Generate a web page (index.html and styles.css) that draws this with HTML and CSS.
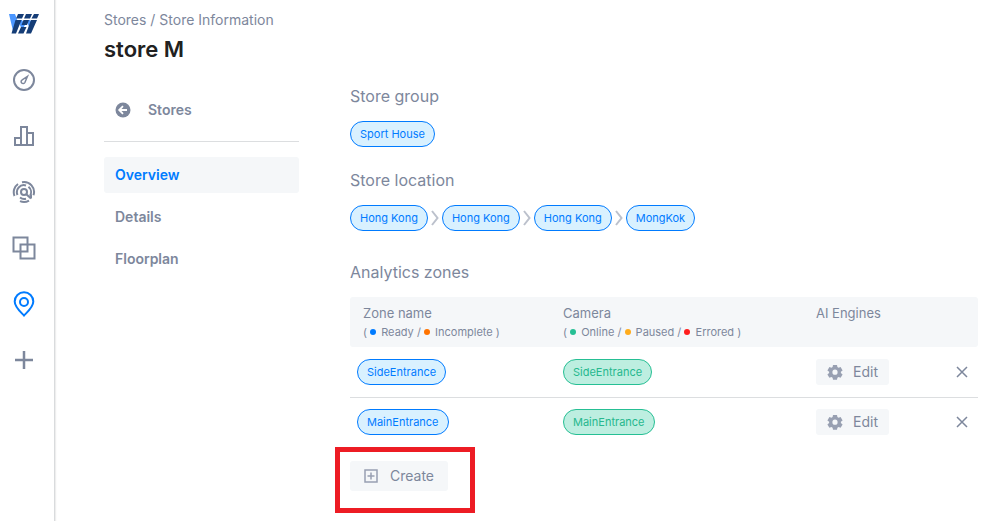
FILE: index.html
```html
<!DOCTYPE html>
<html lang="en">
<head>
    <meta charset="UTF-8">
    <meta name="viewport" content="width=device-width, initial-scale=1.0">
    <title>Store Information</title>
    <link rel="stylesheet" href="styles.css">
</head>
<body>
    <nav class="sidebar" aria-label="Main">
        <a class="logo" href="#" aria-label="Home">
            <svg width="30" height="20" viewBox="0 0 30 20">
                <path fill="#4a96ff" d="M0 0h6l3 8-5 9zM9 6h4l3 5-3 5zM17 6h4l3 4-3 5z"/>
                <path fill="#153d77" d="M9 0h6l-2 4.500H7zM17 0h6l-2 4.500h-6zM25 0h5l-2 4.500h-5.500zM6.500 6h6L7 19.500H2.500zM14.500 6h5.500l-2 5h-5.500zM22 6h6l-6 13.500h-5zM12 13h5.500l-3 6.500H9z"/>
            </svg>
        </a>
        <a class="nav-icon" href="#" aria-label="Dashboard">
            <svg width="24" height="24" viewBox="0 0 24 24">
                <circle cx="12" cy="12" r="10"/>
                <path class="thin" d="M15.500 8.300l-5.300 3.500a2 2 0 1 0 2.700 2.700z"/>
            </svg>
        </a>
        <a class="nav-icon" href="#" aria-label="Analytics">
            <svg width="24" height="24" viewBox="0 0 24 24">
                <path d="M3 14h6v7H3zM9 3h6v18H9zM15 9h6v12h-6z"/>
            </svg>
        </a>
        <a class="nav-icon" href="#" aria-label="Tracking">
            <svg width="24" height="24" viewBox="0 0 24 24">
                <circle cx="12" cy="12" r="3"/>
                <path d="M14 14l5 4.500M14 5.500a7 7 0 0 0-8.500 9.500M8 17.500a7 7 0 0 0 6 1.200M16.500 6.800a7 7 0 0 1 1.500 9M10 2.200a10 10 0 0 1 11.500 13M6 4a10 10 0 0 0-3.500 12M8 21.200a10 10 0 0 0 9-.5M19 18.500v-4"/>
            </svg>
        </a>
        <a class="nav-icon" href="#" aria-label="Compare">
            <svg width="24" height="24" viewBox="0 0 24 24">
                <path d="M1.500 1.500h14v14h-14zM8.500 8.500h14v14h-14z"/>
            </svg>
        </a>
        <a class="nav-icon active" href="#" aria-label="Stores">
            <svg width="24" height="26" viewBox="0 0 24 26">
                <path d="M12 24.500C8 20.500 2.700 16 2.700 10.500a9.300 9.300 0 0 1 18.600 0C21.300 16 16 20.500 12 24.500z"/>
                <circle cx="12" cy="11" r="4"/>
            </svg>
        </a>
        <a class="nav-icon" href="#" aria-label="Add">
            <svg width="24" height="24" viewBox="0 0 24 24">
                <path class="thick" d="M12 3v18M3 12h18"/>
            </svg>
        </a>
    </nav>

    <main class="page">
        <div class="breadcrumb">Stores / Store Information</div>
        <h1>store M</h1>

        <div class="columns">
            <nav class="store-menu" aria-label="Store">
                <a class="back" href="#">
                    <svg width="16" height="16" viewBox="0 0 16 16">
                        <circle cx="8" cy="8" r="7.500" fill="#7d879c"/>
                        <path d="M12 8H4.500M8 4.200L4.200 8 8 11.800" fill="none" stroke="#fff" stroke-width="1.800"/>
                    </svg>
                    Stores
                </a>
                <a class="menu-item selected" href="#">Overview</a>
                <a class="menu-item" href="#">Details</a>
                <a class="menu-item" href="#">Floorplan</a>
            </nav>

            <div class="content">
                <section>
                    <h2>Store group</h2>
                    <div class="path">
                        <span class="chip">Sport House</span>
                    </div>
                </section>

                <section>
                    <h2>Store location</h2>
                    <div class="path">
                        <span class="chip">Hong Kong</span>
                        <svg class="arrow" width="8" height="16" viewBox="0 0 8 16"><path d="M1 1l5.500 7L1 15"/></svg>
                        <span class="chip">Hong Kong</span>
                        <svg class="arrow" width="8" height="16" viewBox="0 0 8 16"><path d="M1 1l5.500 7L1 15"/></svg>
                        <span class="chip">Hong Kong</span>
                        <svg class="arrow" width="8" height="16" viewBox="0 0 8 16"><path d="M1 1l5.500 7L1 15"/></svg>
                        <span class="chip">MongKok</span>
                    </div>
                </section>

                <section class="zones">
                    <h2>Analytics zones</h2>
                    <table>
                        <thead>
                            <tr>
                                <th class="col-zone">
                                    Zone name
                                    <div class="legend">( <i class="dot blue"></i> Ready / <i class="dot orange"></i> Incomplete )</div>
                                </th>
                                <th class="col-camera">
                                    Camera
                                    <div class="legend">( <i class="dot green"></i> Online / <i class="dot yellow"></i> Paused / <i class="dot red"></i> Errored )</div>
                                </th>
                                <th class="col-engine">AI Engines</th>
                                <th class="col-remove"></th>
                            </tr>
                        </thead>
                        <tbody>
                            <tr>
                                <td class="col-zone"><span class="chip">SideEntrance</span></td>
                                <td><span class="chip online">SideEntrance</span></td>
                                <td>
                                    <button class="btn edit" type="button">
                                        <svg width="16" height="16" viewBox="0 0 16 16"><path fill-rule="evenodd" d="M6 1h4l.4 2.100 1.200.7 2-.8 2 3.400-1.700 1.300v1.400l1.700 1.300-2 3.400-2-.8-1.200.7L10 15.700H6l-.4-2-1.200-.7-2 .8-2-3.400 1.700-1.300V7.700L.4 6.400l2-3.400 2 .8 1.200-.7zM8 5.600a2.600 2.600 0 1 0 0 5.200 2.600 2.600 0 0 0 0-5.200z"/></svg>
                                        Edit
                                    </button>
                                </td>
                                <td class="col-remove">
                                    <button class="remove" type="button" aria-label="Remove SideEntrance">
                                        <svg width="12" height="12" viewBox="0 0 12 12"><path d="M1 1l10 10M11 1L1 11"/></svg>
                                    </button>
                                </td>
                            </tr>
                            <tr>
                                <td class="col-zone"><span class="chip">MainEntrance</span></td>
                                <td><span class="chip online">MainEntrance</span></td>
                                <td>
                                    <button class="btn edit" type="button">
                                        <svg width="16" height="16" viewBox="0 0 16 16"><path fill-rule="evenodd" d="M6 1h4l.4 2.100 1.200.7 2-.8 2 3.400-1.700 1.300v1.400l1.700 1.300-2 3.400-2-.8-1.200.7L10 15.700H6l-.4-2-1.200-.7-2 .8-2-3.400 1.700-1.300V7.700L.4 6.400l2-3.400 2 .8 1.200-.7zM8 5.600a2.600 2.600 0 1 0 0 5.200 2.600 2.600 0 0 0 0-5.200z"/></svg>
                                        Edit
                                    </button>
                                </td>
                                <td class="col-remove">
                                    <button class="remove" type="button" aria-label="Remove MainEntrance">
                                        <svg width="12" height="12" viewBox="0 0 12 12"><path d="M1 1l10 10M11 1L1 11"/></svg>
                                    </button>
                                </td>
                            </tr>
                        </tbody>
                    </table>
                    <div class="highlight">
                        <button class="btn create" type="button">
                            <svg width="14" height="14" viewBox="0 0 14 14"><path d="M1 1h12v12H1zM7 3.500v7M3.500 7h7"/></svg>
                            Create
                        </button>
                    </div>
                </section>
            </div>
        </div>
    </main>
</body>
</html>
```

FILE: styles.css
```css
* {
    box-sizing: border-box;
}
body {
    margin: 0;
    min-height: 100vh;
    display: flex;
    background: #fff;
    color: #7d879c;
    font-family: Inter, "Liberation Sans", sans-serif;
    font-size: 14px;
    line-height: 20px;
}
a {
    color: inherit;
    text-decoration: none;
}
svg {
    display: block;
    flex: none;
}

/* Left icon bar */
.sidebar {
    flex: none;
    width: 55px;
    padding: 14px 7px 0 0;
    border-right: 1px solid #d9dbdd;
    box-shadow: 1px 0 1px #eee;
    display: flex;
    flex-direction: column;
    align-items: center;
}
.logo {
    margin-bottom: 18px;
}
.nav-icon {
    height: 56px;
    display: flex;
    align-items: center;
}
.nav-icon svg {
    fill: none;
    stroke: #7d879c;
    stroke-width: 2;
}
.nav-icon .thin {
    stroke-width: 1.5;
}
.nav-icon .thick {
    stroke-width: 2.5;
}
.nav-icon.active svg {
    stroke: #007bff;
}

/* Page */
.page {
    flex: 1;
    min-width: 0;
    padding: 10px 16px 0 49px;
}
h1 {
    margin: 4px 0 0;
    color: #212121;
    font-size: 22px;
    font-weight: 600;
    line-height: 30px;
}
h2 {
    margin: 0 0 13px;
    font-size: 16px;
    font-weight: 400;
    line-height: 24px;
}
.columns {
    display: grid;
    grid-template-columns: 195px 1fr;
    gap: 51px;
    padding-top: 20px;
}

.store-menu {
    display: flex;
    flex-direction: column;
    gap: 6px;
    font-weight: 600;
}
.back {
    display: flex;
    align-items: center;
    gap: 17px;
    height: 58px;
    margin-bottom: 9px;
    padding: 0 11px 6px;
    border-bottom: 1px solid #dcdee0;
}
.menu-item {
    padding: 8px 11px;
    border-radius: 3px;
}
.menu-item.selected {
    background: #f5f7f9;
    color: #007bff;
}

.content section {
    margin-bottom: 21px;
}
.content .zones {
    margin: 29px 0 0;
}
.path {
    display: flex;
    align-items: center;
    gap: 3px;
}
.arrow {
    fill: none;
    stroke: #bcc1cc;
    stroke-width: 2;
}
.chip {
    display: inline-block;
    padding: 0 9px;
    border: 1px solid #007bff;
    border-radius: 13px;
    background: #d9f1ff;
    color: #007bff;
    font-size: 11px;
    line-height: 24px;
}
.chip.online {
    border-color: #26bf94;
    background: #bdeee0;
    color: #26b88e;
}

/* Zones table */
table {
    width: 100%;
    table-layout: fixed;
    border-collapse: collapse;
}
th {
    height: 50px;
    padding: 6px 0 0;
    background: #f5f7f9;
    font-size: 13px;
    font-weight: 400;
    text-align: left;
    vertical-align: top;
}
th:first-child {
    border-radius: 3px 0 0 3px;
}
th:last-child {
    border-radius: 0 3px 3px 0;
}
td {
    height: 50px;
    padding: 0;
    vertical-align: middle;
}
tbody tr + tr {
    border-top: 1px solid #dcdee0;
}
.col-zone {
    width: 213px;
}
td.col-zone {
    padding-left: 7px;
}
th.col-zone {
    padding-left: 13px;
}
.col-camera {
    width: 253px;
}
.col-remove {
    padding-right: 8px;
}
.legend {
    font-size: 11px;
    line-height: 18px;
    white-space: nowrap;
}
.dot {
    display: inline-block;
    width: 6px;
    height: 6px;
    margin-right: 2px;
    border-radius: 50%;
    vertical-align: 1px;
}
.blue {
    background: #007bff;
}
.orange {
    background: #ff7300;
}
.green {
    background: #26bf94;
}
.yellow {
    background: #ffac1c;
}
.red {
    background: #ff1e1e;
}

button {
    border: 0;
    color: inherit;
    font: inherit;
    cursor: pointer;
}
.btn {
    display: flex;
    align-items: center;
    border-radius: 3px;
    background: #f5f7f9;
}
.edit {
    gap: 10px;
    padding: 3px 11px;
}
.edit svg {
    fill: #98a0b2;
}
.create {
    gap: 12px;
    padding: 5px 14px;
}
.create svg {
    fill: none;
    stroke: #98a0b2;
    stroke-width: 1.5;
}
.remove {
    display: block;
    margin-left: auto;
    padding: 2px;
    background: none;
}
.remove svg {
    fill: none;
    stroke: #7d879c;
    stroke-width: 1.5;
}

/* Red frame around the create button */
.highlight {
    position: relative;
    width: max-content;
    margin-top: 14px;
}
.highlight::after {
    content: "";
    position: absolute;
    inset: -14px -27px -22px -15px;
    border: 5px solid #ed1c24;
    pointer-events: none;
}
```
